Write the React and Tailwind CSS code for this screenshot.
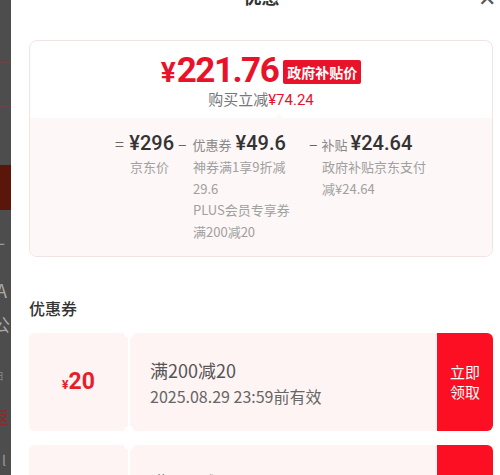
import React from "react";

const cjk = { fontFamily: '"Noto Sans CJK SC", "Noto Sans", sans-serif' };
const num = { fontFamily: 'Roboto, "Noto Sans CJK SC", sans-serif' };

function LeftStrip() {
  return (
    <div className="relative w-[11px] shrink-0 overflow-hidden bg-[#4d4d4d]" style={cjk}>
      <div className="absolute left-0 top-[62px] h-[1px] w-full bg-[#6b4545]" />
      <div className="absolute left-0 top-[106px] h-[1px] w-full bg-[#6b4545]" />
      <div className="absolute left-0 top-[165px] h-[45px] w-full bg-[#5a1608]" />
      <div className="absolute left-[-4px] top-[226px] text-[16px] leading-[24px] text-[#9a9a9a]">L</div>
      <div className="absolute left-[-4px] top-[278px] text-[18px] leading-[24px] text-[#aaaaaa]">A</div>
      <div className="absolute left-[-8px] top-[312px] text-[18px] leading-[24px] text-[#aaaaaa]">公</div>
      <div className="absolute left-[-6px] top-[369px] text-[10px] leading-[14px] text-[#888888]">日</div>
      <div className="absolute left-[-8px] top-[405px] text-[17px] leading-[24px] text-[#8b2a2a]">返</div>
      <div className="absolute left-[2px] top-[450px] text-[14px] leading-[20px] text-[#999999]">l</div>
    </div>
  );
}

function Coupon() {
  return (
    <div className="relative flex h-[98px] w-full rounded-[6px] bg-[#fff4f4]">
      <div className="flex w-[99px] shrink-0 items-center justify-center text-[#e61e2a]" style={num}>
        <span className="mt-[6px] text-[12px] font-bold">¥</span>
        <span className="text-[23px] font-bold leading-[28px]">20</span>
      </div>
      <div className="w-[2px] shrink-0 bg-white" />
      <div className="absolute left-[95px] top-[-5px] h-[10px] w-[10px] rounded-full bg-white" />
      <div className="absolute bottom-[-5px] left-[95px] h-[10px] w-[10px] rounded-full bg-white" />
      <div className="flex flex-1 flex-col justify-center pl-[20px]" style={cjk}>
        <div className="text-[18px] leading-[24px] text-[#555]">满200减20</div>
        <div className="mt-[3px] text-[16px] leading-[22px] text-[#666]">2025.08.29 23:59前有效</div>
      </div>
      <div className="flex w-[56px] shrink-0 items-center justify-center rounded-r-[6px] bg-[#fc0f22]" style={cjk}>
        <div className="text-center text-[15px] leading-[20px] text-white">
          立即
          <br />
          领取
        </div>
      </div>
    </div>
  );
}

export default function App() {
  return (
    <div className="flex h-[475px] w-[500px] overflow-hidden bg-white" style={cjk}>
      <LeftStrip />
      <div className="flex flex-1 flex-col">
        <div className="relative mt-[-16px] flex h-[24px] items-center justify-center">
          <span className="ml-[12px] text-[18px] font-bold leading-[24px] text-[#333]">优惠</span>
          <span className="absolute right-[4px] top-[0px] text-[22px] leading-[24px] text-[#555]">✕</span>
        </div>
        <div className="ml-[18px] mr-[7px] mt-[32px] rounded-[8px] border border-[#f3e4e4]">
          <div className="relative flex flex-col items-center pb-[8px] pt-[12px]">
            <div className="flex h-[36px] items-center">
              <span className="mr-[1px] mt-[3px] text-[28px] font-bold leading-[36px] text-[#e8132a]" style={num}>¥</span>
              <span className="text-[35px] font-bold leading-[36px] tracking-[-1.5px] text-[#e8132a]" style={num}>221.76</span>
              <span className="ml-[5px] mt-[2px] rounded-[2px] bg-[#e8132a] px-[4px] text-[14px] font-bold leading-[24px] text-white">政府补贴价</span>
            </div>
            <div className="text-[15px] leading-[20px] text-[#777]">
              购买立减<span className="text-[#e8132a]" style={num}>¥74.24</span>
            </div>
            <div className="absolute bottom-[-1px] left-[244px] h-0 w-0 border-x-[5px] border-b-[5px] border-x-transparent border-b-[#fdf7f7]" />
          </div>
          <div className="flex rounded-b-[8px] bg-[#fdf7f7] pb-[14px] pl-[83px] pt-[12px]">
            <div className="flex w-[65px] flex-col items-end">
              <div className="mr-[4px] flex w-[59px] items-baseline justify-between text-[#333]">
                <span className="text-[16px] text-[#666]">=</span>
                <span className="text-[20px] font-medium leading-[26px]" style={num}>¥296</span>
              </div>
              <div className="mr-[9px] text-[13px] leading-[22px] text-[#a0a0a0]">京东价</div>
            </div>
            <div className="flex w-[131px] flex-col">
              <div className="flex items-baseline text-[#333]">
                <span className="mr-[6px] text-[16px] text-[#666]">–</span>
                <span className="mr-[4px] text-[13px] text-[#888]">优惠券</span>
                <span className="text-[20px] font-medium leading-[26px]" style={num}>¥49.6</span>
              </div>
              <div className="ml-[15px] text-[13px] leading-[21.5px] text-[#a0a0a0]">
                <div>神券满1享9折减</div>
                <div>29.6</div>
                <div>PLUS会员专享券</div>
                <div>满200减20</div>
              </div>
            </div>
            <div className="flex flex-col">
              <div className="flex items-baseline text-[#333]">
                <span className="mr-[4px] text-[16px] text-[#666]">–</span>
                <span className="mr-[3px] text-[13px] text-[#888]">补贴</span>
                <span className="text-[20px] font-medium leading-[26px]" style={num}>¥24.64</span>
              </div>
              <div className="ml-[13px] text-[13px] leading-[21.5px] text-[#a0a0a0]">
                <div>政府补贴京东支付</div>
                <div>减¥24.64</div>
              </div>
            </div>
          </div>
        </div>
        <div className="mt-[17px] h-[10px] bg-[#f5f6f8]" />
        <div className="flex flex-col pl-[18px] pr-[7px]">
          <div className="mt-[22px] text-[16px] font-medium leading-[24px] text-[#333]">优惠券</div>
          <div className="mt-[13px] flex flex-col gap-[14px]">
            <Coupon />
            <Coupon />
          </div>
        </div>
      </div>
    </div>
  );
}
